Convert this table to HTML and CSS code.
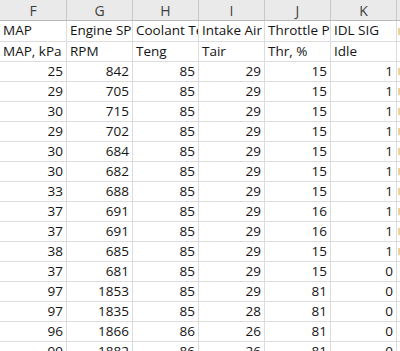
FILE: index.html
```html
<!DOCTYPE html>
<html>
<head>
<meta charset="utf-8">
<link rel="stylesheet" href="styles.css">
</head>
<body>
<div class="sheet">
  <div class="c hd">F</div><div class="c hd">G</div><div class="c hd">H</div><div class="c hd">I</div><div class="c hd">J</div><div class="c hd">K</div><div class="c hd edge"></div>

  <div class="c t">MAP</div><div class="c t">Engine SPEED</div><div class="c t">Coolant Temp</div><div class="c t">Intake Air</div><div class="c t">Throttle Pos</div><div class="c t">IDL SIG</div><div class="c edge"><span class="mk"></span></div>
  <div class="c t">MAP, kPa</div><div class="c t">RPM</div><div class="c t">Teng</div><div class="c t">Tair</div><div class="c t">Thr, %</div><div class="c t">Idle</div><div class="c edge"></div>

  <div class="c n">25</div><div class="c n">842</div><div class="c n">85</div><div class="c n">29</div><div class="c n">15</div><div class="c n">1</div><div class="c edge"><span class="mk"></span></div>
  <div class="c n">29</div><div class="c n">705</div><div class="c n">85</div><div class="c n">29</div><div class="c n">15</div><div class="c n">1</div><div class="c edge"><span class="mk"></span></div>
  <div class="c n">30</div><div class="c n">715</div><div class="c n">85</div><div class="c n">29</div><div class="c n">15</div><div class="c n">1</div><div class="c edge"><span class="mk"></span></div>
  <div class="c n">29</div><div class="c n">702</div><div class="c n">85</div><div class="c n">29</div><div class="c n">15</div><div class="c n">1</div><div class="c edge"><span class="mk"></span></div>
  <div class="c n">30</div><div class="c n">684</div><div class="c n">85</div><div class="c n">29</div><div class="c n">15</div><div class="c n">1</div><div class="c edge"><span class="mk"></span></div>
  <div class="c n">30</div><div class="c n">682</div><div class="c n">85</div><div class="c n">29</div><div class="c n">15</div><div class="c n">1</div><div class="c edge"><span class="mk"></span></div>
  <div class="c n">33</div><div class="c n">688</div><div class="c n">85</div><div class="c n">29</div><div class="c n">15</div><div class="c n">1</div><div class="c edge"><span class="mk"></span></div>
  <div class="c n">37</div><div class="c n">691</div><div class="c n">85</div><div class="c n">29</div><div class="c n">16</div><div class="c n">1</div><div class="c edge"><span class="mk"></span></div>
  <div class="c n">37</div><div class="c n">691</div><div class="c n">85</div><div class="c n">29</div><div class="c n">16</div><div class="c n">1</div><div class="c edge"><span class="mk"></span></div>
  <div class="c n">38</div><div class="c n">685</div><div class="c n">85</div><div class="c n">29</div><div class="c n">15</div><div class="c n">1</div><div class="c edge"><span class="mk"></span></div>
  <div class="c n">37</div><div class="c n">681</div><div class="c n">85</div><div class="c n">29</div><div class="c n">15</div><div class="c n">0</div><div class="c edge"></div>
  <div class="c n">97</div><div class="c n">1853</div><div class="c n">85</div><div class="c n">29</div><div class="c n">81</div><div class="c n">0</div><div class="c edge"></div>
  <div class="c n">97</div><div class="c n">1835</div><div class="c n">85</div><div class="c n">28</div><div class="c n">81</div><div class="c n">0</div><div class="c edge"></div>
  <div class="c n">96</div><div class="c n">1866</div><div class="c n">86</div><div class="c n">26</div><div class="c n">81</div><div class="c n">0</div><div class="c edge"></div>
  <div class="c n">99</div><div class="c n">1882</div><div class="c n">86</div><div class="c n">26</div><div class="c n">81</div><div class="c n">0</div><div class="c edge"></div>
</div>
</body>
</html>
```

FILE: styles.css
```css
html, body {
  margin: 0;
  padding: 0;
  background: #ffffff;
  overflow: hidden;
}

.sheet {
  display: grid;
  grid-template-columns: 67px 66px 66px 66px 66px 66px 3px;
  grid-template-rows: 21px 21px 20px repeat(15, 20px);
  width: 400px;
  font-family: "Open Sans", "Liberation Sans", sans-serif;
  font-size: 13.5px;
  color: #141414;
}

.c {
  box-sizing: border-box;
  border-right: 1px solid #dcdcdc;
  border-bottom: 1px solid #dcdcdc;
  overflow: hidden;
  white-space: nowrap;
  display: flex;
  align-items: center;
  line-height: 1;
}

.hd {
  background: #eaeaea;
  color: #404040;
  justify-content: center;
  border-right-color: #c8c8c8;
  border-bottom-color: #b8b8b8;
  font-size: 14px;
  padding-top: 1px;
}

.t {
  padding-left: 3px;
  justify-content: flex-start;
}

.n {
  padding-right: 3px;
  justify-content: flex-end;
}

.edge {
  border-right: none;
  align-items: center;
  padding-left: 1px;
}

.hd.edge {
  background: #eaeaea;
}

.mk {
  display: block;
  width: 2px;
  height: 7px;
  background: #ecd29a;
}
```
